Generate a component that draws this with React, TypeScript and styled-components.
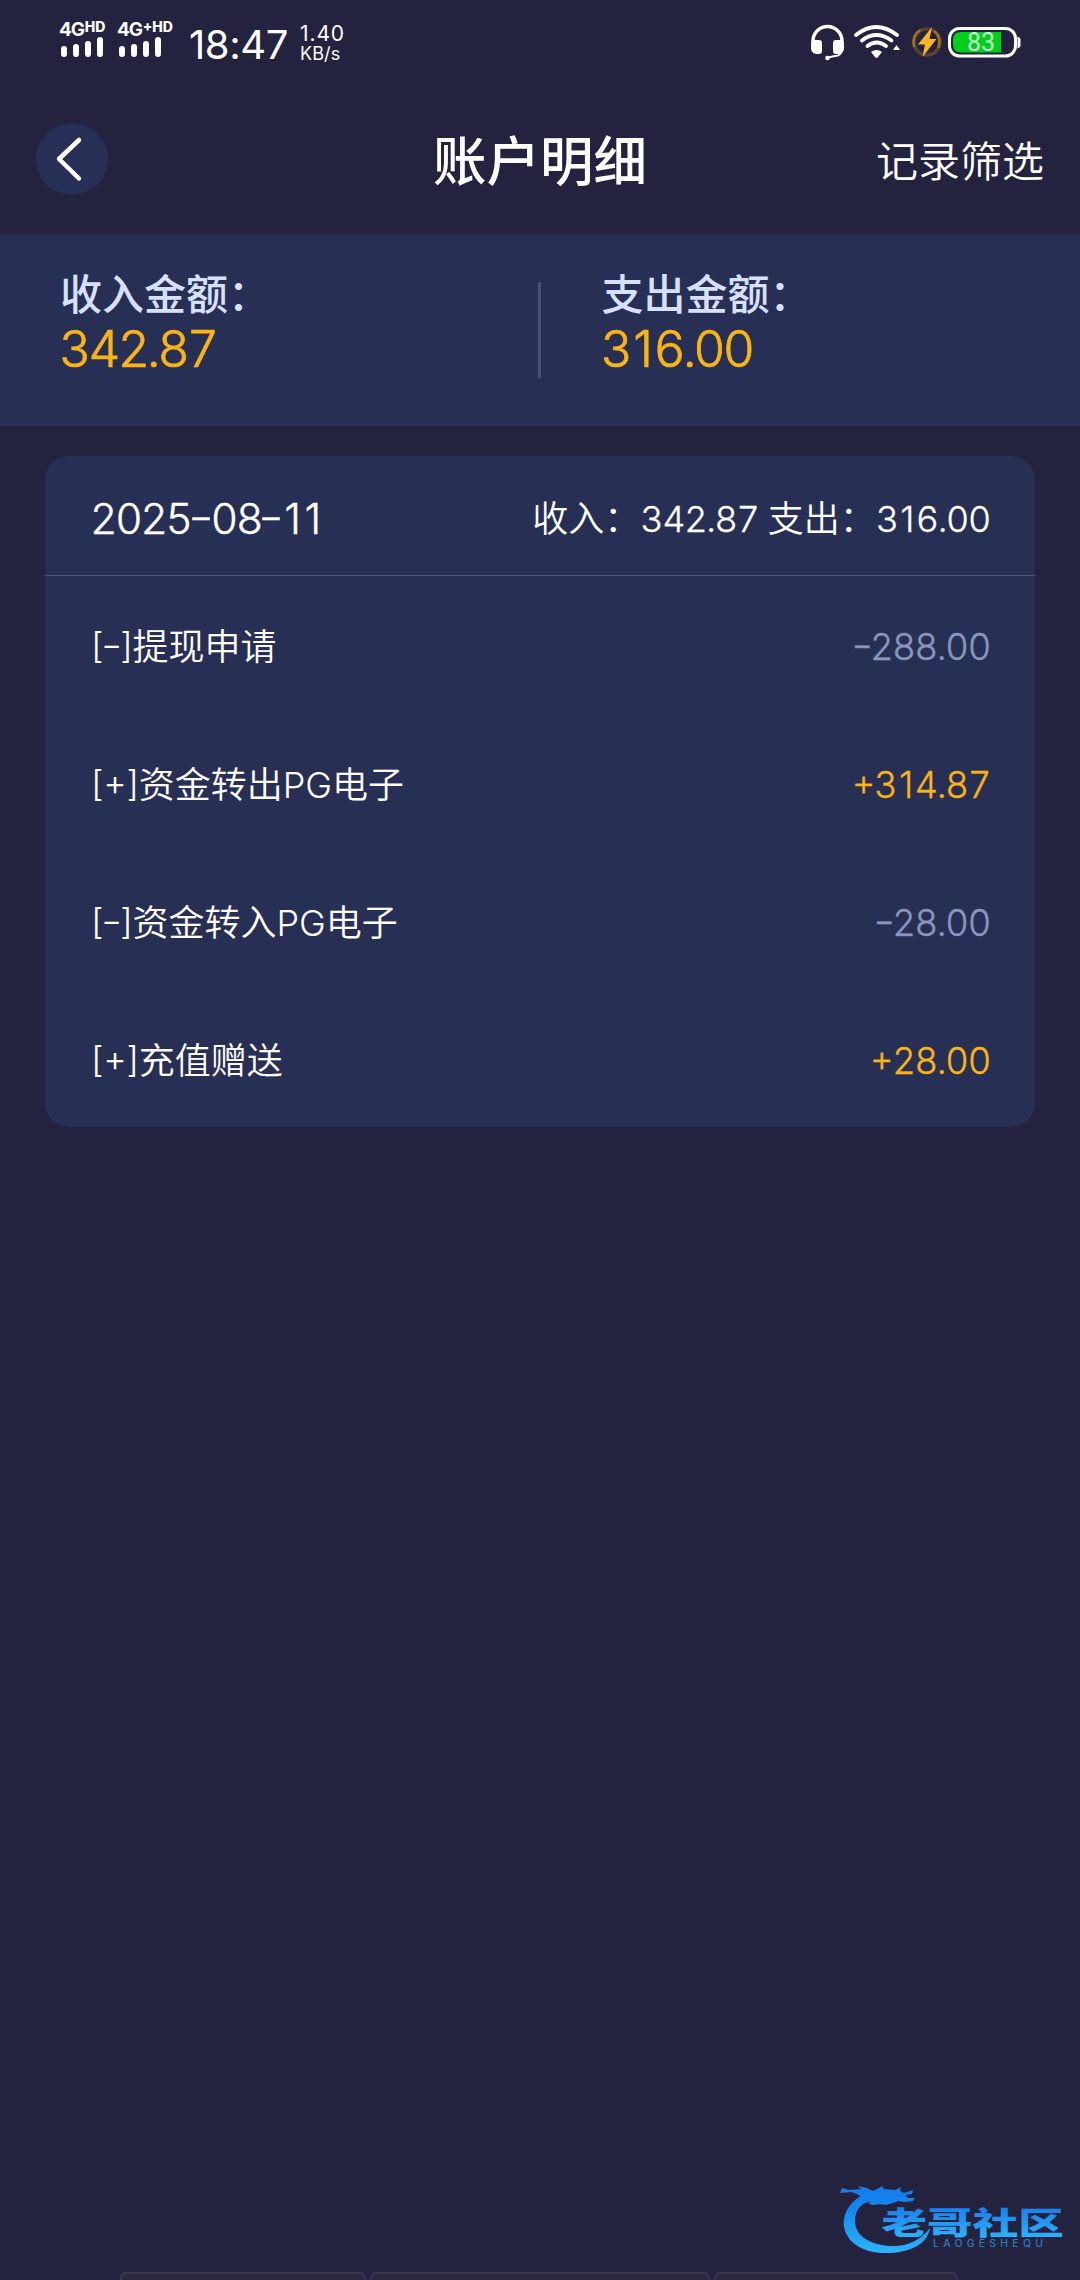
import React from 'react';
import styled, { createGlobalStyle } from 'styled-components';

const GlobalStyle = createGlobalStyle`
  * { box-sizing: border-box; }
  html, body { margin: 0; padding: 0; background: #24233f; }
  body { font-family: Inter, "Noto Sans CJK SC", sans-serif; color: #fff; }
`;

const Screen = styled.div`
  position: relative;
  display: flex;
  flex-direction: column;
  width: 1080px;
  height: 2280px;
  overflow: hidden;
  background: #24233f;
`;

const StatusBar = styled.div`
  display: flex;
  justify-content: space-between;
  height: 84px;
  padding: 21px 59px 0 59px;
`;

const StatusGroup = styled.div`
  display: flex;
  align-items: flex-start;
`;

const Signal = styled.div<{ $width: number }>`
  display: flex;
  flex-direction: column;
  width: ${p => p.$width}px;
`;

const SignalLabel = styled.div`
  display: flex;
  height: 16px;
  font-size: 19px;
  line-height: 18px;
  font-weight: 700;
  letter-spacing: -1.2px;
  white-space: nowrap;
`;

const SignalMark = styled.span`
  margin-left: 1px;
  font-size: 14px;
  line-height: 12px;
  font-weight: 800;
  letter-spacing: 0;
`;

const Clock = styled.div`
  width: 111px;
  font-size: 40px;
  line-height: 47px;
  letter-spacing: -0.4px;
`;

const Speed = styled.div`
  display: flex;
  flex-direction: column;
`;

const SpeedValue = styled.span`
  font-size: 21px;
  line-height: 26px;
  letter-spacing: 0.9px;
`;

const SpeedUnit = styled.span`
  font-size: 18px;
  line-height: 13px;
  letter-spacing: 0.1px;
`;

const Header = styled.header`
  display: grid;
  grid-template-columns: 1fr auto 1fr;
  align-items: center;
  height: 150px;
  padding: 0 36px;
`;

const BackButton = styled.button`
  display: flex;
  width: 72px;
  height: 72px;
  padding: 0;
  border: 0;
  border-radius: 50%;
  background: #282f56;
`;

const Title = styled.h1`
  margin: 6px 0 0;
  font-size: 53.5px;
  line-height: 70px;
  font-weight: 500;
`;

const FilterLink = styled.span`
  justify-self: end;
  margin-top: 5px;
  font-size: 42px;
  line-height: 60px;
  font-weight: 350;
`;

const Summary = styled.section`
  display: flex;
  align-items: center;
  height: 192px;
  background: #282f54;
`;

const SummaryCell = styled.div`
  flex: 1;
  height: 100%;
  padding: 34px 0 0 60px;
`;

const SummaryLabel = styled.div`
  font-size: 42px;
  line-height: 54px;
  font-weight: 450;
  color: #d7e0ff;
`;

const SummaryValue = styled.div`
  margin-left: -1px;
  font-size: 50px;
  line-height: 54px;
  font-weight: 350;
  font-feature-settings: "tnum";
  letter-spacing: -3px;
  -webkit-text-stroke: 0.7px #fab414;
  color: #fab414;
`;

const SummaryDivider = styled.div`
  width: 3px;
  height: 96px;
  margin: 0 1px 0 -1px;
  background: #4a5178;
`;

const Card = styled.section`
  margin: 30px 45px 0;
  height: 671px;
  border-radius: 24px;
  background: #282f54;
`;

const CardHeader = styled.div`
  display: flex;
  align-items: center;
  justify-content: space-between;
  height: 120px;
  padding: 4px 45px 0 46px;
  border-bottom: 1px solid #4d5680;
`;

const DateText = styled.span`
  margin: 1px 0 0 -1px;
  font-size: 42.5px;
  font-weight: 350;
  font-feature-settings: "tnum";
  letter-spacing: -2.3px;
  white-space: nowrap;
  -webkit-text-stroke: 0.4px #fff;
`;

/* A wide hyphen raised to the middle of the figures. */
const Hyphen = styled.span<{ $width: number }>`
  display: inline-block;
  width: ${p => p.$width}px;
  text-align: center;
  letter-spacing: 0;
  font-feature-settings: "case";
  transform: scaleX(1.3);
`;

/* A footless figure 1, narrower than the tabular figures round it. */
const NarrowOne = styled.span`
  margin: 0 0.07em;
  font-feature-settings: "tnum" 0;
`;

const Totals = styled.span`
  margin-top: -3px;
  font-size: 36px;
  font-weight: 350;
  white-space: pre;
  word-spacing: -1px;
`;

const Digits = styled.span`
  font-feature-settings: "tnum";
  letter-spacing: -1.3px;
  -webkit-text-stroke: 0.3px #fff;
`;

const Row = styled.div`
  display: flex;
  align-items: center;
  justify-content: space-between;
  height: 138px;
  padding: 4px 45px 0 46px;
`;

const RowName = styled.span`
  margin-top: -6px;
  font-size: 36px;
  font-weight: 350;
  font-feature-settings: "case";
`;

const Bracket = styled.span`
  letter-spacing: -0.3px;
`;

const RowAmount = styled.span<{ $income: boolean }>`
  font-size: 36.5px;
  font-weight: 320;
  font-feature-settings: "tnum", "case";
  letter-spacing: -1.3px;
  -webkit-text-stroke: 0.3px ${p => (p.$income ? '#fab414' : '#8a96bf')};
  color: ${p => (p.$income ? '#fab414' : '#8a96bf')};
`;

const BottomTabs = styled.div`
  display: grid;
  grid-template-columns: 246px 340px 244px;
  gap: 4px;
  height: 8px;
  margin: auto 0 0 120px;
  overflow: hidden;
`;

const BottomTab = styled.div`
  height: 30px;
  border: 2px solid #38374f;
  border-radius: 6px;
  background: #2a283f;
`;

const Watermark = styled.svg`
  position: absolute;
  left: 836px;
  top: 2180px;
`;

const bars = [11, 13, 16, 20];

const SignalBars = () => (
  <svg width="44" height="20" viewBox="0 0 44 20">
    {bars.map((h, i) => (
      <rect key={h} x={2 + i * 12} y={20 - h} width="6" height={h} rx="3" fill="#fff" />
    ))}
  </svg>
);

const StatusIcons = () => (
  <svg width="212" height="44" viewBox="809 21 212 44" fill="none">
    <path d="M813 45v-4a14.500 14.500 0 0 1 29 0v4" stroke="#fff" strokeWidth="3.400" />
    <path d="M811 44q0-4 4-4h4q3 0 3 3v8q0 3-3 3h-3q-5-1-5-6zM844 44q0-4-4-4h-4q-3 0-3 3v8q0 3 3 3h3q5-1 5-6z" fill="#fff" />
    <path d="M842 50q-1 6-7 6l-7 1.500" stroke="#fff" strokeWidth="1.800" />
    <circle cx="827.500" cy="58" r="2.300" fill="#fff" />
    <g stroke="#fff" strokeWidth="3.800" strokeLinecap="round">
      <path d="M856 35q20-16 41 0" />
      <path d="M862 40.500q14-11 29.500 0" />
      <path d="M867.500 46q9-7 18.500 0" />
    </g>
    <path d="M871 52q5.500-4 11 0l-4.200 5.200q-1.300 1.300-2.600 0z" fill="#fff" />
    <path d="M896.500 45l3.500 5h-7z" fill="#fff" />
    <circle cx="927" cy="42" r="13" stroke="#5a4230" strokeWidth="3.500" />
    <path d="M914.500 47a13.500 13.500 0 0 1 6-17M934 31a13.500 13.500 0 0 1 4 17" stroke="#a56d1a" strokeWidth="2.500" />
    <path d="M932 27l-14 17.500h7l-2.500 12.500 14-18h-7z" fill="#ffb620" />
    <rect x="949.500" y="28.500" width="66" height="27.500" rx="10" stroke="#fff" strokeWidth="3" />
    <path d="M961 32h40v20.500h-40q-8 0-8-8v-4.500q0-8 8-8z" fill="#00d01c" />
    <path d="M1017.500 36.500q3 1 3 3v6q0 2-3 3z" fill="#fff" />
    <text x="967" y="51" fontFamily="Roboto, sans-serif" fontWeight="400" fontSize="25" fill="#c8f8cf">83</text>
  </svg>
);

const BackIcon = () => (
  <svg width="72" height="72" viewBox="0 0 72 72" fill="none">
    <path d="M43 17L23 36 43 55.500" stroke="#fff" strokeWidth="4.500" strokeLinecap="round" strokeLinejoin="round" />
  </svg>
);

const CommunityMark = () => (
  <Watermark width="236" height="80" viewBox="836 2180 236 80">
    <defs>
      <linearGradient id="dragon" x1="0" y1="2186" x2="0" y2="2252" gradientUnits="userSpaceOnUse">
        <stop offset="0" stopColor="#167bea" />
        <stop offset="0.350" stopColor="#1488f0" />
        <stop offset="1" stopColor="#2bb3fb" />
      </linearGradient>
      <linearGradient id="name" x1="0" y1="-26" x2="0" y2="3" gradientUnits="userSpaceOnUse">
        <stop offset="0" stopColor="#1a7fe8" />
        <stop offset="1" stopColor="#2db0fa" />
      </linearGradient>
    </defs>
    <g fill="url(#dragon)">
      <path d="M876 2190C852 2196 842 2212 844 2227C848 2246 868 2254 890 2253C912 2252 928 2243 930 2228C920 2241 906 2247 891 2246C870 2245 855 2236 855 2221C855 2207 865 2199 880 2201z" />
      <path d="M842 2188l7 2 12-1-3-3 9 2 6 3 6-3 3-2 2 3 11 1 6-3-1 4 4 2 9-3-1 4-7 1 3 3 7 0-2 3-8 1-7-1-5 2-7 2-6-1-7 1-4-1 2-4-8-2-6-4-6-2-11 1z" />
    </g>
    <text x="0" y="0" transform="translate(881.500 2233.500) scale(1.470 1)" fontFamily='"Noto Sans CJK SC", sans-serif' fontWeight="900" fontSize="31" fill="url(#name)">老哥社区</text>
    <text x="933" y="2247" fontFamily="Inter, sans-serif" fontWeight="500" fontSize="10.500" textLength="110" fill="#2280bd">LAOGESHEQU</text>
  </Watermark>
);

const entries = [
  { sign: '-', name: '提现申请', amount: '288.00' },
  { sign: '+', name: '资金转出PG电子', amount: '314.87' },
  { sign: '-', name: '资金转入PG电子', amount: '28.00' },
  { sign: '+', name: '充值赠送', amount: '28.00' },
];

const Sign = ({ value, width }: { value: string; width: number }) =>
  value === '-' ? <Hyphen $width={width}>-</Hyphen> : <>{value}</>;

const Figures = ({ value }: { value: string }) => (
  <>
    {value.split(/(1)/).map((part, i) =>
      part === '1' ? <NarrowOne key={i}>1</NarrowOne> : part,
    )}
  </>
);

export default function App() {
  return (
    <Screen>
      <GlobalStyle />
      <StatusBar>
        <StatusGroup>
          <Signal $width={58}>
            <SignalLabel>4G<SignalMark>HD</SignalMark></SignalLabel>
            <SignalBars />
          </Signal>
          <Signal $width={72}>
            <SignalLabel>4G<SignalMark>+HD</SignalMark></SignalLabel>
            <SignalBars />
          </Signal>
          <Clock>18:47</Clock>
          <Speed>
            <SpeedValue>1.40</SpeedValue>
            <SpeedUnit>KB/s</SpeedUnit>
          </Speed>
        </StatusGroup>
        <StatusIcons />
      </StatusBar>
      <Header>
        <BackButton aria-label="返回"><BackIcon /></BackButton>
        <Title>账户明细</Title>
        <FilterLink>记录筛选</FilterLink>
      </Header>
      <Summary>
        <SummaryCell>
          <SummaryLabel>收入金额：</SummaryLabel>
          <SummaryValue>342.87</SummaryValue>
        </SummaryCell>
        <SummaryDivider />
        <SummaryCell>
          <SummaryLabel>支出金额：</SummaryLabel>
          <SummaryValue><Figures value="316.00" /></SummaryValue>
        </SummaryCell>
      </Summary>
      <Card>
        <CardHeader>
          <DateText>
            2025<Hyphen $width={20}>-</Hyphen>08<Hyphen $width={20}>-</Hyphen><Figures value="11" />
          </DateText>
          <Totals>
            收入：<Digits>342.87</Digits> 支出：<Digits><Figures value="316.00" /></Digits>
          </Totals>
        </CardHeader>
        {entries.map(e => (
          <Row key={e.name}>
            <RowName>
              <Bracket>[<Sign value={e.sign} width={17} />]</Bracket>{e.name}
            </RowName>
            <RowAmount $income={e.sign === '+'}>
              <Sign value={e.sign} width={16} /><Figures value={e.amount} />
            </RowAmount>
          </Row>
        ))}
      </Card>
      <BottomTabs>
        <BottomTab />
        <BottomTab />
        <BottomTab />
      </BottomTabs>
      <CommunityMark />
    </Screen>
  );
}
